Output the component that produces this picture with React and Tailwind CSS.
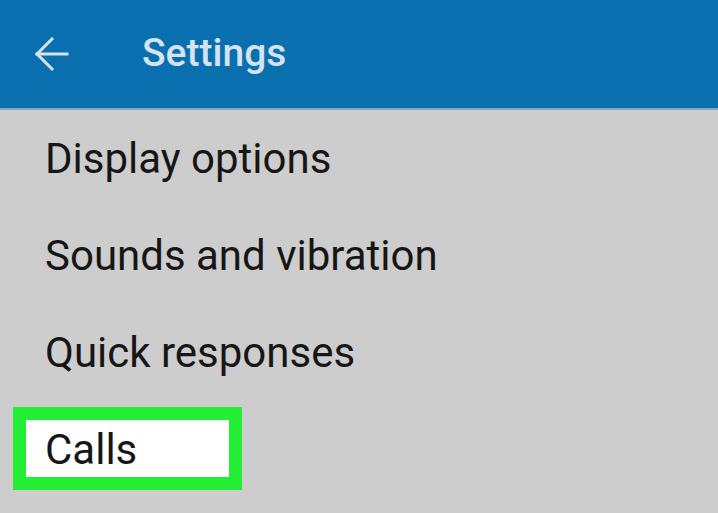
import React from "react";

const items = ["Display options", "Sounds and vibration", "Quick responses"];

function BackArrow() {
  return (
    <svg width="36" height="36" viewBox="0 0 36 36" fill="none" stroke="#d6e2ee" strokeWidth="3" strokeLinecap="square">
      <path d="M3 17H33" />
      <path d="M18 2L3 17L18 32" />
    </svg>
  );
}

export default function App() {
  return (
    <div className="w-[718px] h-[513px] overflow-hidden bg-[#cdcdcd]" style={{ fontFamily: "Roboto, 'Liberation Sans', sans-serif" }}>
      {/* Top bar */}
      <div className="h-[108px] bg-[#0a6fae] flex items-center">
        <div className="ml-[34px] mt-[2px]">
          <BackArrow />
        </div>
        <h1 className="ml-[72px] text-[39px] font-medium text-[#d6e2ee] leading-none pb-[2px]">Settings</h1>
      </div>
      <div className="h-[2px] bg-[#8ea3b6]" />

      {/* List */}
      <div>
        {items.map((label) => (
          <div key={label} className="h-[97px] pl-[45px] text-[42px] leading-[97px] text-[#161616]">
            {label}
          </div>
        ))}
        <div className="pt-[6px] pl-[13px]">
          <div className="w-[229px] h-[83px] border-[13px] border-[#22ee33] bg-white pl-[19px] pt-[2px] text-[42px] leading-[55px] text-[#161616]">
            Calls
          </div>
        </div>
      </div>
    </div>
  );
}
